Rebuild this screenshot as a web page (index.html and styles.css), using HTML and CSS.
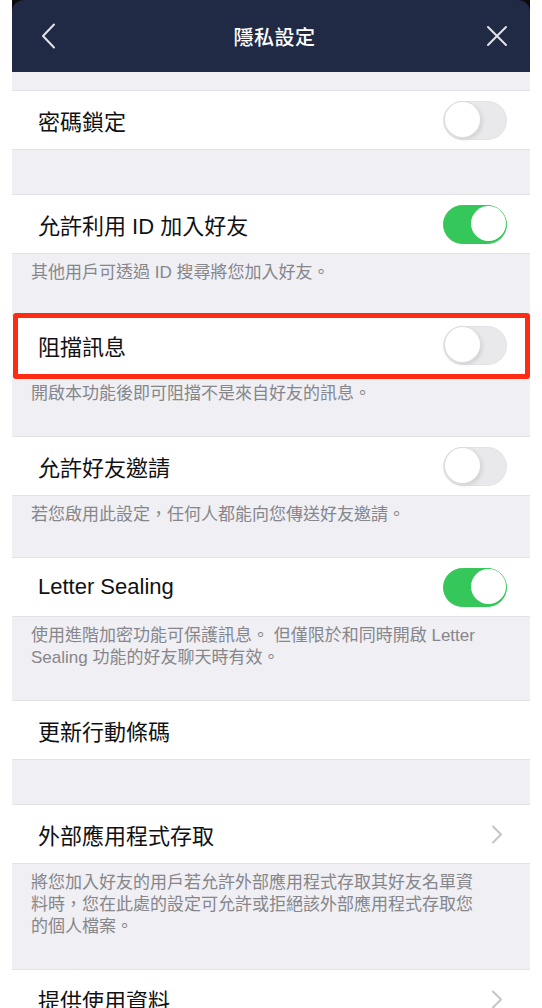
FILE: index.html
```html
<!DOCTYPE html>
<html lang="zh-Hant">
<head>
<meta charset="utf-8">
<title>隱私設定</title>
<link rel="stylesheet" href="styles.css">
</head>
<body>
<div class="screen">
  <div class="nav-wrap">
    <header class="nav">
      <span class="nav-btn back">
        <svg width="16" height="26" viewBox="0 0 16 26"><polyline points="13,1.5 2,13 13,24.5" fill="none" stroke="#e4e4e8" stroke-width="2" stroke-linecap="round" stroke-linejoin="round"/></svg>
      </span>
      <h1 class="title">隱私設定</h1>
      <span class="nav-btn close">
        <svg width="22" height="22" viewBox="0 0 22 22"><path d="M2 2 L20 20 M20 2 L2 20" fill="none" stroke="#e4e4e8" stroke-width="2" stroke-linecap="round"/></svg>
      </span>
    </header>
  </div>

  <div class="gap small"></div>
  <div class="row"><span class="label">密碼鎖定</span><span class="toggle"></span></div>
  <div class="gap"></div>

  <div class="row"><span class="label">允許利用 ID 加入好友</span><span class="toggle on"></span></div>
  <p class="foot">其他用戶可透過 ID 搜尋將您加入好友。</p>

  <div class="row highlight"><span class="label">阻擋訊息</span><span class="toggle"></span></div>
  <p class="foot">開啟本功能後即可阻擋不是來自好友的訊息。</p>

  <div class="row"><span class="label">允許好友邀請</span><span class="toggle"></span></div>
  <p class="foot">若您啟用此設定，任何人都能向您傳送好友邀請。</p>

  <div class="row"><span class="label">Letter Sealing</span><span class="toggle on"></span></div>
  <p class="foot">使用進階加密功能可保護訊息。 但僅限於和同時開啟 Letter Sealing 功能的好友聊天時有效。</p>

  <div class="row"><span class="label">更新行動條碼</span></div>
  <div class="gap"></div>

  <div class="row"><span class="label">外部應用程式存取</span><span class="chev"><svg width="12" height="19" viewBox="0 0 12 19"><polyline points="2,1.5 10,9.5 2,17.5" fill="none" stroke="#c4c4c9" stroke-width="2" stroke-linecap="round" stroke-linejoin="round"/></svg></span></div>
  <p class="foot">將您加入好友的用戶若允許外部應用程式存取其好友名單資料時，您在此處的設定可允許或拒絕該外部應用程式存取您的個人檔案。</p>

  <div class="row"><span class="label">提供使用資料</span><span class="chev"><svg width="12" height="19" viewBox="0 0 12 19"><polyline points="2,1.5 10,9.5 2,17.5" fill="none" stroke="#c4c4c9" stroke-width="2" stroke-linecap="round" stroke-linejoin="round"/></svg></span></div>
</div>
</body>
</html>
```

FILE: styles.css
```css
html, body {
  margin: 0;
  padding: 0;
  background: #ffffff;
}

body {
  font-family: "Liberation Sans", "Noto Sans CJK TC", sans-serif;
}

.screen {
  margin: 0 12px;
  height: 1008px;
  overflow: hidden;
  background: #efeff4;
}

.nav-wrap {
  background: #0c0c0e;
}

.nav {
  height: 72px;
  background: #202a45;
  border-radius: 12px 12px 0 0;
  display: flex;
  align-items: center;
  justify-content: space-between;
  padding: 0 22px 0 29px;
}

.nav-btn {
  display: flex;
  align-items: center;
  width: 24px;
}

.nav-btn.close {
  justify-content: flex-end;
}

.title {
  margin: 0;
  font-size: 20px;
  font-weight: 500;
  color: #ffffff;
  letter-spacing: 0.5px;
}

.gap {
  height: 44px;
}

.gap.small {
  height: 18px;
}

.row {
  position: relative;
  height: 58px;
  background: #ffffff;
  border-top: 1px solid #e2e2e7;
  margin-top: -1px;
  border-bottom: 1px solid #e2e2e7;
  display: flex;
  align-items: center;
  justify-content: space-between;
  padding: 0 23px 0 26px;
}

.gap + .row,
.gap.small + .row {
  margin-top: 0;
}

.label {
  font-size: 22px;
  color: #111113;
}

.toggle {
  position: relative;
  width: 64px;
  height: 39px;
  box-sizing: border-box;
  border-radius: 20px;
  background: #e9e9eb;
  border: 1.5px solid #e3e3e6;
}

.toggle::after {
  content: "";
  position: absolute;
  top: 0.5px;
  left: 0.5px;
  width: 35px;
  height: 35px;
  border-radius: 50%;
  background: #ffffff;
  box-shadow: 0 0 0 1px #dcdce0, 2px 2px 4px rgba(0, 0, 0, 0.12);
}

.toggle.on {
  background: #35c759;
  border-color: #35c759;
}

.toggle.on::after {
  left: auto;
  right: 0.5px;
  box-shadow: none;
}

.chev {
  display: flex;
  margin-right: 4px;
}

.foot {
  margin: 0;
  padding: 8px 48px 32px 19px;
  font-size: 17px;
  line-height: 22px;
  color: #86868b;
}

.highlight::after {
  content: "";
  position: absolute;
  top: -3px;
  bottom: -5px;
  left: 1px;
  right: 0;
  border: 5px solid #ff2b12;
  border-radius: 3px;
  pointer-events: none;
}
```
